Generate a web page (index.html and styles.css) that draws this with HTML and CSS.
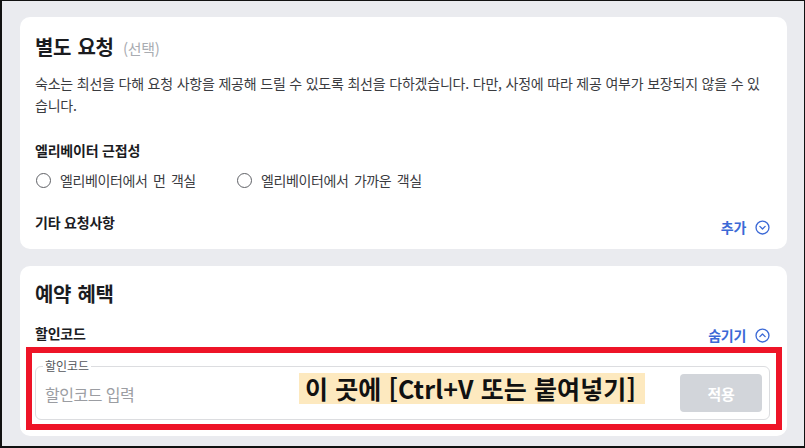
FILE: index.html
```html
<!DOCTYPE html>
<html lang="ko">
<head>
<meta charset="utf-8">
<link rel="stylesheet" href="styles.css">
</head>
<body>
<div class="frame">
  <section class="card card-request">
    <h2 class="card-title">별도 요청 <span class="optional">(선택)</span></h2>
    <p class="desc">숙소는 최선을 다해 요청 사항을 제공해 드릴 수 있도록 최선을 다하겠습니다. 다만, 사정에 따라 제공 여부가 보장되지 않을 수 있습니다.</p>
    <h3 class="label label-elev">엘리베이터 근접성</h3>
    <div class="radios">
      <label class="radio"><span class="circle"></span><span class="radio-text">엘리베이터에서 먼 객실</span></label>
      <label class="radio"><span class="circle"></span><span class="radio-text">엘리베이터에서 가까운 객실</span></label>
    </div>
    <div class="row row-etc">
      <h3 class="label">기타 요청사항</h3>
      <button class="link link-add">추가
        <svg class="ic" viewBox="0 0 16 16" width="16" height="16"><circle cx="8" cy="8" r="6.9" fill="none" stroke="currentColor" stroke-width="1.4"/><path d="M5.2 6.8 L8 9.6 L10.8 6.8" fill="none" stroke="currentColor" stroke-width="1.4" stroke-linecap="round" stroke-linejoin="round"/></svg>
      </button>
    </div>
  </section>

  <section class="card card-benefit">
    <h2 class="card-title">예약 혜택</h2>
    <div class="row row-code">
      <h3 class="label">할인코드</h3>
      <button class="link link-hide">숨기기
        <svg class="ic" viewBox="0 0 16 16" width="16" height="16"><circle cx="8" cy="8" r="6.9" fill="none" stroke="currentColor" stroke-width="1.4"/><path d="M5.2 9.2 L8 6.4 L10.8 9.2" fill="none" stroke="currentColor" stroke-width="1.4" stroke-linecap="round" stroke-linejoin="round"/></svg>
      </button>
    </div>
    <div class="field">
      <span class="field-label">할인코드</span>
      <span class="placeholder">할인코드 입력</span>
      <button class="apply">적용</button>
      <span class="note">이 곳에 [Ctrl+V 또는 붙여넣기]</span>
    </div>
    <div class="mark"></div>
  </section>
</div>
</body>
</html>
```
FILE: styles.css
```css
* { box-sizing: border-box; }
html, body { margin: 0; padding: 0; }
body {
  font-family: "Noto Sans CJK KR", "Noto Sans", sans-serif;
  color: #1b1c1f;
}
.frame {
  width: 805px;
  height: 448px;
  background: #eaebef;
  border-style: solid;
  border-color: #111;
  border-width: 1px 1px 2px 2px;
  padding: 16px 17px 0 18px;
  display: flex;
  flex-direction: column;
  gap: 17px;
}
.card {
  background: #fff;
  border-radius: 10px;
  padding: 16px 17px 12px 15px;
  position: relative;
}
.card-title {
  margin: 0;
  font-size: 20px;
  line-height: 28px;
  font-weight: 700;
  letter-spacing: -0.3px;
  word-spacing: 1px;
  color: #1b1c1f;
}
.optional {
  font-size: 15px;
  font-weight: 400;
  color: #a9acb2;
  letter-spacing: -0.3px;
  margin-left: 3px;
}
.desc {
  margin: 9px 0 0;
  font-size: 14px;
  line-height: 22px;
  letter-spacing: -0.2px;
  color: #3a3b3f;
}
.label {
  margin: 0;
  font-size: 14px;
  line-height: 20px;
  font-weight: 700;
  letter-spacing: -0.2px;
  color: #1b1c1f;
}
.label-elev { margin-top: 24px; }
.radios {
  display: flex;
  margin-top: 10px;
  padding-left: 1px;
  height: 20px;
  align-items: center;
}
.radio {
  display: flex;
  align-items: center;
  width: 201px;
}
.circle {
  width: 15px;
  height: 15px;
  border: 1.5px solid #5f6166;
  border-radius: 50%;
  margin-right: 9px;
  flex: none;
}
.radio-text {
  font-size: 14px;
  line-height: 20px;
  letter-spacing: -0.4px;
  word-spacing: 2px;
  color: #3a3b3f;
}
.row {
  display: flex;
  justify-content: space-between;
  align-items: flex-start;
}
.row-etc { margin-top: 22px; }
.link {
  border: 0;
  background: none;
  padding: 0;
  font-family: inherit;
  font-size: 14px;
  line-height: 20px;
  font-weight: 700;
  letter-spacing: -0.3px;
  color: #3b69d6;
  display: flex;
  align-items: center;
  gap: 9px;
}
.link-add { margin-top: 5px; }
.ic { display: block; width: 15px; height: 15px; }

.card-benefit { padding: 14px 17px 16px 15px; }
.row-code { margin-top: 15px; }
.link-hide { margin-top: 2px; }
.field {
  position: relative;
  margin-top: 21px;
  height: 54px;
  border: 1px solid #dcdde0;
  border-radius: 6px;
  display: flex;
  align-items: center;
  justify-content: space-between;
  padding: 0 7px 0 9px;
}
.field-label {
  position: absolute;
  left: 7px;
  top: -7px;
  background: #fff;
  padding: 0 2px;
  font-size: 12px;
  line-height: 12px;
  letter-spacing: 0;
  color: #55575c;
}
.placeholder {
  font-size: 16px;
  letter-spacing: -0.5px;
  color: #9b9da2;
  margin-top: 1px;
}
.apply {
  width: 82px;
  height: 38px;
  border: 0;
  border-radius: 4px;
  background: #d2d5da;
  color: #fff;
  font-family: inherit;
  font-size: 15px;
  font-weight: 700;
  letter-spacing: -0.3px;
}
.note {
  position: absolute;
  left: 263px;
  top: 6px;
  height: 31px;
  line-height: 31px;
  padding: 0 9px 0 6px;
  background: #fde9bf;
  color: #111;
  font-size: 25px;
  font-weight: 700;
  letter-spacing: 0.1px;
  white-space: nowrap;
}
.mark {
  position: absolute;
  left: 6px;
  top: 81px;
  width: 756px;
  height: 83px;
  border: 6px solid #ee1427;
  pointer-events: none;
}
```
